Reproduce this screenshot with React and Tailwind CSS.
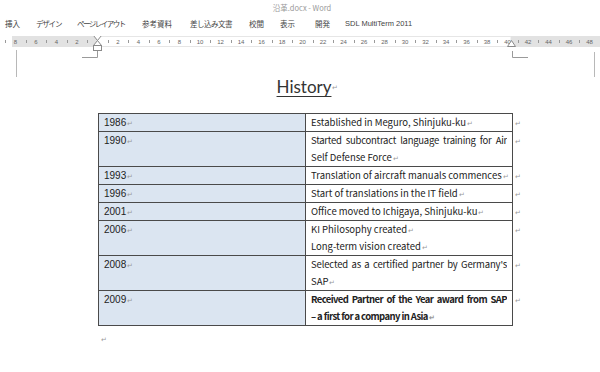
import React from "react";

const jp = { fontFamily: '"Noto Sans CJK JP", "Noto Sans", sans-serif' };

function Pm() {
  return <span className="text-[7px] leading-none text-[#9a9a9a] ml-[1px]">↵</span>;
}

const tabs = [
  ["挿入", 31, ""],
  ["デザイン", 41, "tracking-[-1.2px]"],
  ["ページレイアウト", 65, "tracking-[-1.5px]"],
  ["参考資料", 48, ""],
  ["差し込み文書", 59, "tracking-[-0.5px]"],
  ["校閲", 31, ""],
  ["表示", 35, ""],
  ["開発", 30, ""],
  ["SDL MultiTerm 2011", 120, ""],
];

const nums = [-8, -6, -4, -2, 2, 4, 6, 8, 10, 12, 14, 16, 18, 20, 22, 24, 26, 28, 30, 32, 34, 36, 38, 40, 42, 44, 46, 48];
const ticks = [];
for (let n = -9; n <= 49; n += 2) ticks.push(n);
const X = (n) => 97.5 + n * 10.25;

const rows = [
  { y: "1986", lines: [{ t: "Established in Meguro, Shinjuku-ku" }] },
  {
    y: "1990",
    lines: [
      { t: "Started subcontract language training for Air", j: true, nopm: true, tr: "tracking-[-0.25px]" },
      { t: "Self Defense Force" },
    ],
  },
  { y: "1993", lines: [{ t: "Translation of aircraft manuals commences" }] },
  { y: "1996", lines: [{ t: "Start of translations in the IT field" }] },
  { y: "2001", lines: [{ t: "Office moved to Ichigaya, Shinjuku-ku" }] },
  { y: "2006", lines: [{ t: "KI Philosophy created" }, { t: "Long-term vision created" }] },
  {
    y: "2008",
    lines: [
      { t: "Selected as a certified partner by Germany's", j: true, nopm: true, tr: "tracking-[-0.15px]" },
      { t: "SAP" },
    ],
  },
  {
    y: "2009",
    bold: true,
    lines: [
      { t: "Received Partner of the Year award from SAP", j: true, nopm: true, tr: "tracking-[-0.6px]" },
      { t: "– a first for a company in Asia", tr: "tracking-[-0.6px]" },
    ],
  },
];

function Ruler() {
  return (
    <svg width="600" height="24" viewBox="0 0 600 24" className="block">
      <rect x="12" y="0" width="85" height="11" fill="#e2e2e2" />
      <rect x="97" y="0.5" width="414" height="10" fill="#fff" stroke="#e6e6e6" />
      <rect x="511" y="0" width="89" height="11" fill="#e2e2e2" />
      {ticks.map((n) => (
        <line key={"t" + n} x1={Math.round(X(n)) + 0.5} x2={Math.round(X(n)) + 0.5} y1="4" y2="7" stroke="#9a9a9a" />
      ))}
      {nums.map((n) => (
        <text
          key={n}
          x={X(n)}
          y="7.8"
          fontSize="6"
          textAnchor="middle"
          fill="#666"
          fontFamily="Liberation Sans, sans-serif"
        >
          {Math.abs(n)}
        </text>
      ))}
      <path d="M93.5 -0.5 H101.5 L97.5 4.5 Z" fill="#fff" stroke="#8a8a8a" />
      <path d="M97.5 4.5 L101.5 9.5 H93.5 Z" fill="#fff" stroke="#8a8a8a" />
      <rect x="93.5" y="9.5" width="8" height="5" fill="#fff" stroke="#8a8a8a" />
      <path d="M511.5 4.5 L515.5 10.5 H507.5 Z" fill="#fff" stroke="#8a8a8a" />
      <line x1="16.5" x2="16.5" y1="14" y2="24" stroke="#b8b8b8" />
      <line x1="594.5" x2="594.5" y1="16" y2="24" stroke="#b8b8b8" />
      <path d="M82 21.5 H97.5 V15" fill="none" stroke="#9a9a9a" />
      <path d="M528 21.5 H512.5 V15" fill="none" stroke="#9a9a9a" />
    </svg>
  );
}

export default function App() {
  return (
    <div className="w-[600px] h-[372px] bg-white overflow-hidden text-[#222] flex flex-col" style={jp}>
      <div className="h-[16px] flex items-center justify-center text-[7.5px] text-[#9a9a9a] pl-[4px]">
        沿革.docx - Word
      </div>
      <div className="h-[15px] flex items-center pl-[5px] text-[7.5px] text-[#444]">
        {tabs.map(([t, w, tr]) => (
          <div
            key={t}
            className={"shrink-0 whitespace-nowrap " + tr}
            style={{
              width: w,
              fontFamily: t.startsWith("SDL") ? '"Liberation Sans", sans-serif' : undefined,
            }}
          >
            {t}
          </div>
        ))}
      </div>
      <div className="mt-[5px] h-[24px]">
        <Ruler />
      </div>

      <div className="flex justify-between px-[16px] h-0">
        <div className="w-px h-[18px] bg-[#b8b8b8] -mt-[1px]" />
        <div className="w-px h-[18px] bg-[#b8b8b8] -mt-[1px] mr-[-11px]" />
      </div>

      <div className="ml-[98px] w-[430px] flex flex-col">
        <div className="mt-[15px] w-[415px] h-[24px] flex justify-center items-center pl-[4px]">
          <span
            className="text-[17px] leading-[24px] text-[#333] underline underline-offset-[3px] decoration-[1px]"
            style={{ fontFamily: "Lato, sans-serif" }}
          >
            History
          </span>
          <Pm />
        </div>
        <table className="mt-[14px] border-collapse table-fixed w-[427px] text-[9.5px] leading-[17px]">
          <colgroup>
            <col className="w-[207px]" />
            <col className="w-[207px]" />
            <col className="w-[13px]" />
          </colgroup>
          <tbody>
            {rows.map((r) => (
              <tr key={r.y}>
                <td className="align-top border border-[#4a4a4a] bg-[#dbe5f1] pl-[5px] py-0">
                  <span className="text-[10px]" style={{ fontFamily: '"Liberation Sans", sans-serif' }}>
                    {r.y}
                  </span>
                  <Pm />
                </td>
                <td
                  className={
                    "align-top border border-[#4a4a4a] pl-[5px] pr-[5px] py-0 " + (r.bold ? "font-bold" : "")
                  }
                >
                  {r.lines.map((l, i) => (
                    <div
                      key={i}
                      className={
                        "h-[17px] " +
                        (l.j ? "[text-align-last:justify] overflow-hidden " : "whitespace-nowrap ") +
                        (l.tr || "")
                      }
                    >
                      {l.t}
                      {!l.nopm && <Pm />}
                    </div>
                  ))}
                </td>
                <td className="align-top py-0 pl-[1px] border-0">
                  <Pm />
                </td>
              </tr>
            ))}
          </tbody>
        </table>
        <div className="h-[17px] pl-[2px] leading-[17px] mt-[1px]">
          <Pm />
        </div>
      </div>
    </div>
  );
}
